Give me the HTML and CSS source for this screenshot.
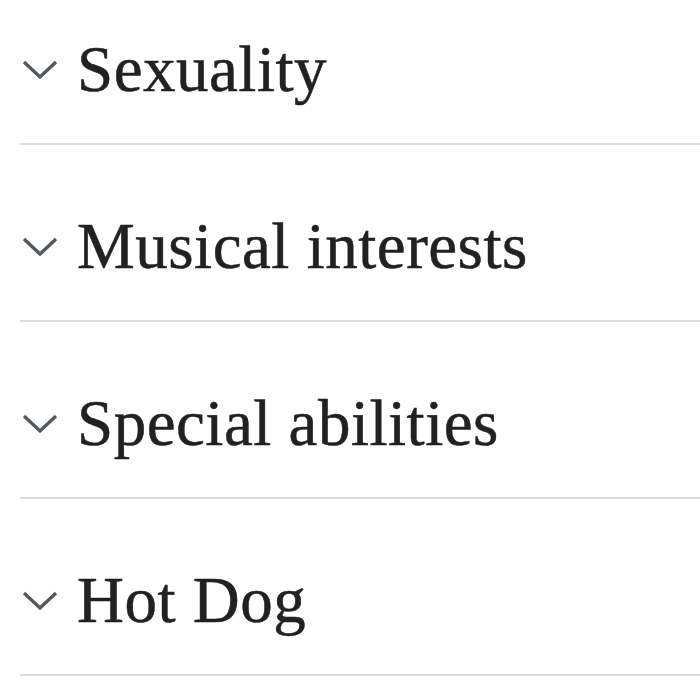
FILE: index.html
```html
<!DOCTYPE html>
<html lang="en">
<head>
<meta charset="utf-8">
<link rel="stylesheet" href="styles.css">
</head>
<body>
<div class="sections">
  <div class="section first">
    <svg class="chev" width="36" height="20" viewBox="0 0 36 20"><path d="M2 2 L18 17 L34 2" fill="none" stroke="#54595d" stroke-width="3.4"/></svg>
    <h2 class="title">Sexuality</h2>
  </div>
  <div class="section">
    <svg class="chev" width="36" height="20" viewBox="0 0 36 20"><path d="M2 2 L18 17 L34 2" fill="none" stroke="#54595d" stroke-width="3.4"/></svg>
    <h2 class="title">Musical interests</h2>
  </div>
  <div class="section">
    <svg class="chev" width="36" height="20" viewBox="0 0 36 20"><path d="M2 2 L18 17 L34 2" fill="none" stroke="#54595d" stroke-width="3.4"/></svg>
    <h2 class="title">Special abilities</h2>
  </div>
  <div class="section">
    <svg class="chev" width="36" height="20" viewBox="0 0 36 20"><path d="M2 2 L18 17 L34 2" fill="none" stroke="#54595d" stroke-width="3.4"/></svg>
    <h2 class="title">Hot Dog</h2>
  </div>
</div>
</body>
</html>
```
FILE: styles.css
```css
html, body {
  margin: 0;
  padding: 0;
  background: #ffffff;
}
.sections {
  padding-left: 20px;
}
.section {
  display: flex;
  align-items: center;
  gap: 19px;
  padding-top: 69px;
  padding-bottom: 42px;
  padding-left: 2px;
  border-bottom: 2px solid #dadce0;
}
.section.first {
  padding-top: 37px;
}
.chev {
  flex: none;
  display: block;
  margin-top: 2px;
}
.title {
  margin: 0;
  font-family: "Liberation Serif", serif;
  font-weight: normal;
  font-size: 65px;
  line-height: 64px;
  letter-spacing: 0.5px;
  color: #202122;
  -webkit-text-stroke: 0.5px #202122;
}
```
